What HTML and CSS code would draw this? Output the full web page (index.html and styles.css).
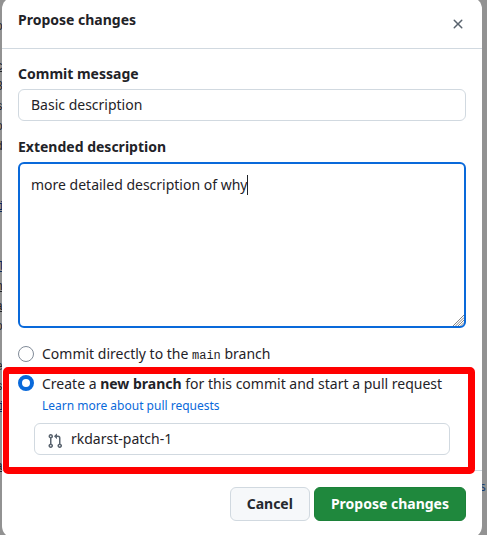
FILE: index.html
```
<!DOCTYPE html>
<html lang="en">
<head>
<meta charset="utf-8">
<title>Propose changes</title>
<link rel="stylesheet" href="styles.css">
</head>
<body>
<div class="page-left">
  <span class="bit" style="top:17px">o</span>
  <span class="bit under" style="top:57px">c</span>
  <span class="bit" style="top:77px">8</span>
  <span class="bit" style="top:97px">s</span>
  <span class="bit" style="top:117px">o</span>
  <span class="bit" style="top:137px">d</span>
  <span class="bit link" style="top:197px">i</span>
  <span class="bit link" style="top:257px">l</span>
  <span class="bit under" style="top:277px">n</span>
  <span class="bit under" style="top:297px">a</span>
  <span class="bit" style="top:317px">o</span>
  <span class="bit" style="top:357px">e</span>
  <span class="bit" style="top:377px">s</span>
  <span class="bit link" style="top:397px">i</span>
  <span class="bit under" style="top:457px">a</span>
</div>
<div class="page-right">s</div>
<section class="dialog">
  <header class="header">
    <h1 class="title">Propose changes</h1>
    <svg class="close" viewBox="0 0 16 16" width="16" height="16"><path d="M3.72 3.72a.75.75 0 0 1 1.06 0L8 6.94l3.22-3.22a.75.75 0 1 1 1.06 1.06L9.06 8l3.22 3.22a.75.75 0 1 1-1.06 1.06L8 9.06l-3.22 3.22a.75.75 0 0 1-1.06-1.06L6.94 8 3.72 4.78a.75.75 0 0 1 0-1.06Z"/></svg>
  </header>
  <div class="body">
    <div class="label">Commit message</div>
    <div class="field">Basic description</div>
    <div class="label label-next">Extended description</div>
    <div class="textarea"><span class="typed">more detailed description of why</span><svg class="grip" width="11" height="11" viewBox="0 0 11 11"><path d="M0 11L11 0M2.5 11L11 2.5M5 11L11 5M7.5 11L11 7.5"/></svg></div>
    <div class="choice first"><span class="radio"></span><span>Commit directly to the <code>main</code> branch</span></div>
    <div class="choice second"><span class="radio on"></span><span>Create a <b>new branch</b> for this commit and start a pull request</span></div>
    <a class="learn">Learn more about pull requests</a>
    <div class="branch">
      <svg class="pr" viewBox="0 0 16 16" width="16" height="16"><path d="M1.5 3.25a2.25 2.25 0 1 1 3 2.122v5.256a2.251 2.251 0 1 1-1.5 0V5.372A2.25 2.25 0 0 1 1.5 3.25Zm5.677-.177L9.573.677A.25.25 0 0 1 10 .854V2.5h1A2.5 2.5 0 0 1 13.5 5v5.628a2.251 2.251 0 1 1-1.5 0V5a1 1 0 0 0-1-1h-1v1.646a.25.25 0 0 1-.427.177L7.177 3.427a.25.25 0 0 1 0-.354ZM3.75 2.5a.75.75 0 1 0 0 1.5.75.75 0 0 0 0-1.5Zm0 9.5a.75.75 0 1 0 0 1.5.75.75 0 0 0 0-1.5Zm8.25.75a.75.75 0 1 0 1.5 0 .75.75 0 0 0-1.5 0Z"/></svg>
      <span>rkdarst-patch-1</span>
    </div>
  </div>
  <footer class="footer">
    <div class="button">Cancel</div>
    <div class="button primary">Propose changes</div>
  </footer>
</section>
<div class="highlight"></div>
</body>
</html>
```
FILE: styles.css
```
* { box-sizing: border-box; }
body {
  margin: 0;
  width: 487px;
  height: 535px;
  position: relative;
  overflow: hidden;
  background: #929292;
  color: #1f2328;
  font: 14px/20px "Noto Sans", sans-serif;
}
.page-left {
  position: absolute;
  left: 0;
  top: 0;
  width: 3px;
  height: 535px;
  overflow: hidden;
  font: 12px/20px "Liberation Mono", monospace;
}
.bit { position: absolute; right: 0; }
.under { text-decoration: underline; }
.link { right: -2px; color: #0b2a5c; text-decoration: underline; }
.page-right {
  position: absolute;
  left: 480px;
  top: 477px;
  color: #163e70;
  font-size: 12px;
}
.dialog {
  position: relative;
  width: 480px;
  height: 541px;
  margin: -3px 0 0 2px;
  background: #fff;
  border-radius: 12px;
}
.header {
  height: 52px;
  display: flex;
  justify-content: space-between;
  padding: 13px 16px 0;
  border-bottom: 1px solid #d1d9e0;
}
.title { margin: 0; font-size: 14px; line-height: 20px; font-weight: 700; }
.close { margin: 6px 0 0; fill: #59636e; }
.body { height: 421px; padding: 15px 16px 0; }
.label { font-weight: 700; height: 20px; }
.field {
  height: 32px;
  margin-top: 5px;
  padding: 5px 12px;
  border: 1px solid #d1d9e0;
  border-radius: 6px;
}
.label-next { margin-top: 16px; }
.textarea {
  position: relative;
  height: 166px;
  margin-top: 5px;
  padding: 11px 11px;
  border: 2px solid #0969da;
  border-radius: 6px;
}
.typed { display: inline-block; border-right: 1px solid #1f2328; height: 20px; }
.grip {
  position: absolute;
  right: 0;
  bottom: 0;
  stroke: #777;
  stroke-width: .9;
}
.choice { display: flex; gap: 8px; height: 20px; }
.first { margin-top: 16px; }
.second { margin-top: 10px; }
.radio {
  width: 16px;
  height: 16px;
  margin-top: 2px;
  border: 1px solid #818b98;
  border-radius: 50%;
}
.radio.on { border: 4px solid #0969da; margin-top: 1px; }
code { font: 12px "Liberation Mono", monospace; }
.learn {
  display: block;
  margin: 3px 0 0 24px;
  color: #0969da;
  font-size: 12px;
  line-height: 18px;
}
.branch {
  display: flex;
  height: 32px;
  margin: 8px 16px 0;
  padding: 5px 12px;
  border: 1px solid #d1d9e0;
  border-radius: 6px;
}
.pr { margin: 4px 8px 0 0; fill: #59636e; }
.footer {
  display: flex;
  justify-content: flex-end;
  gap: 4px;
  padding: 16px;
  border-top: 1px solid #d1d9e0;
}
.button {
  height: 34px;
  padding: 6px 16px;
  border: 1px solid #d1d9e0;
  border-radius: 6px;
  background: #f6f8fa;
  font-weight: 700;
  color: #25292e;
}
.primary { background: #1f883d; border-color: #1c8139; color: #fff; }
.highlight {
  position: absolute;
  left: 3px;
  top: 367px;
  width: 472px;
  height: 107px;
  border: 7px solid #f00;
  border-left-width: 6px;
  border-radius: 5px;
}
```
